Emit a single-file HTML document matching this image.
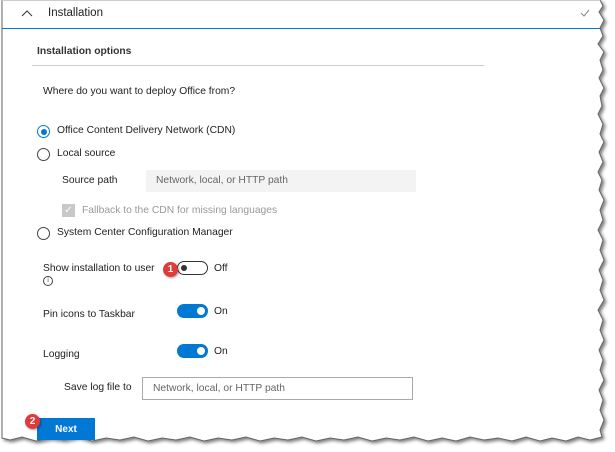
<!DOCTYPE html>
<html><head><style>
body{margin:0;width:615px;height:452px;background:#fff;position:relative;overflow:hidden;font-family:"Liberation Sans",sans-serif;color:#222}
.a{position:absolute;white-space:nowrap}
.t{font-size:10.3px}
.radio{position:absolute;width:13px;height:13px;border:1px solid #444;border-radius:50%;box-sizing:border-box}
.tog{position:absolute;width:31px;height:14px;border-radius:8px;box-sizing:border-box}
.badge{position:absolute;width:15px;height:15px;border-radius:50%;background:#e03a3a;color:#fff;font-size:10px;font-weight:bold;text-align:center;line-height:15px;box-shadow:1px 1px 2px rgba(0,0,0,.4)}
.inp{position:absolute;box-sizing:border-box;font-size:10.3px;color:#666;padding-left:10px}
</style></head><body>
<svg class="a" style="left:0;top:0" width="615" height="452">
<polygon fill="#fff" stroke="#666" stroke-width="1" style="filter:drop-shadow(2px 2px 1.5px rgba(0,0,0,.5))" points="2,0 600,0 603,6 599,12 604,20 600,28 603,36 598,44 604,52 600,60 603,70 599,78 604,88 600,96 602,106 598,114 603,124 600,134 604,142 599,152 603,162 598,172 602,180 599,190 604,200 600,210 603,220 598,230 603,240 600,250 604,260 599,270 603,280 600,290 604,300 598,310 603,320 600,330 604,340 599,350 603,360 600,370 604,380 599,390 603,400 600,410 604,420 600,430 602,437 590,440 578,437 566,441 552,438 540,441 526,437 512,441 498,438 484,440 470,437 456,441 442,438 428,441 414,437 400,440 386,438 372,441 358,437 344,440 330,438 316,441 302,437 288,440 274,438 260,441 246,437 232,440 218,438 204,441 190,437 176,440 162,438 148,441 134,437 120,440 106,438 92,441 78,437 64,440 50,438 36,441 22,437 10,440 2,438"/>
</svg>
<div class="a" style="left:2px;top:28px;width:598px;height:1px;background:#0078d4"></div>
<div class="a" style="left:2px;top:0;width:598px;height:1px;background:#ccc"></div>
<svg class="a" style="left:21px;top:9px" width="12" height="8"><path d="M1 7 L6 2 L11 7" stroke="#333" fill="none" stroke-width="1"/></svg>
<div class="a" style="left:48px;top:7px;font-size:11.5px;color:#222">Installation</div>
<svg class="a" style="left:580px;top:9px" width="10" height="8"><path d="M1 4 L4 7 L9 1" stroke="#888" fill="none" stroke-width="1"/></svg>
<div class="a" style="left:37px;top:46px;font-size:10.3px;font-weight:bold;color:#333">Installation options</div>
<div class="a" style="left:32px;top:65px;width:452px;height:1px;background:#ccc"></div>
<div class="a t" style="left:43px;top:86px">Where do you want to deploy Office from?</div>
<div class="radio" style="left:37px;top:125px;border-color:#0078d4"><div style="position:absolute;left:2.5px;top:2.5px;width:6px;height:6px;border-radius:50%;background:#0078d4"></div></div>
<div class="a t" style="left:57px;top:125px">Office Content Delivery Network (CDN)</div>
<div class="radio" style="left:37px;top:148px"></div>
<div class="a t" style="left:57px;top:148px">Local source</div>
<div class="a t" style="left:62px;top:175px">Source path</div>
<div class="inp" style="left:146px;top:170px;width:270px;height:22px;background:#f3f3f3;line-height:22px">Network, local, or HTTP path</div>
<div class="a" style="left:62px;top:204px;width:13px;height:13px;background:#c8c8c8;color:#fff;font-size:10px;text-align:center;line-height:13px">✓</div>
<div class="a t" style="left:82px;top:205px;color:#999">Fallback to the CDN for missing languages</div>
<div class="radio" style="left:37px;top:227px"></div>
<div class="a t" style="left:57px;top:227px">System Center Configuration Manager</div>
<div class="a t" style="left:43px;top:263px">Show installation to user</div>
<div class="a" style="left:43px;top:276px;width:8px;height:8px;border:1px solid #444;border-radius:50%;font-size:6px;text-align:center;line-height:8px">i</div>
<div class="tog" style="left:177px;top:261px;border:1px solid #333;background:#fff"><div style="position:absolute;left:3px;top:3px;width:6px;height:6px;border-radius:50%;background:#333"></div></div>
<div class="badge" style="left:163px;top:262px">1</div>
<div class="a t" style="left:214px;top:263px">Off</div>
<div class="a t" style="left:43px;top:309px">Pin icons to Taskbar</div>
<div class="tog" style="left:177px;top:304px;background:#0078d4"><div style="position:absolute;right:3px;top:3px;width:8px;height:8px;border-radius:50%;background:#fff"></div></div>
<div class="a t" style="left:214px;top:306px">On</div>
<div class="a t" style="left:43px;top:349px">Logging</div>
<div class="tog" style="left:177px;top:344px;background:#0078d4"><div style="position:absolute;right:3px;top:3px;width:8px;height:8px;border-radius:50%;background:#fff"></div></div>
<div class="a t" style="left:214px;top:346px">On</div>
<div class="a t" style="left:64px;top:382px">Save log file to</div>
<div class="inp" style="left:142px;top:377px;width:271px;height:23px;border:1px solid #aaa;line-height:21px">Network, local, or HTTP path</div>
<div class="a" style="left:37px;top:418px;width:58px;height:22px;background:#0078d4;color:#fff;font-size:10px;font-weight:bold;text-align:center;line-height:24px">Next</div>
<div class="badge" style="left:25px;top:414px">2</div>
</body></html>
